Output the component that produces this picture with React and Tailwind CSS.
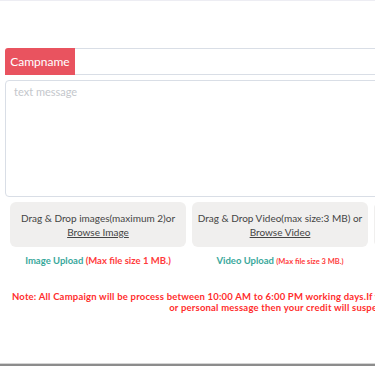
import React, { useState } from 'react';

const UploadBox = ({ line, link }) => (
  <div className="w-[176px] shrink-0 h-[45px] rounded-[6px] bg-[#f0efee] flex flex-col items-center justify-center whitespace-nowrap text-[10px] leading-[14px] text-[#444]">
    <span>{line}</span>
    <span className="underline">{link}</span>
  </div>
);

const App = () => {
  const [campname, setCampname] = useState('');
  const [message, setMessage] = useState('');

  return (
    <div className="w-[375px] h-[366px] overflow-hidden bg-white flex flex-col font-['Lato',sans-serif]">
      <div className="h-px bg-[#ededf3] shrink-0" />
      <div className="w-[560px] shrink-0 pt-[47px] px-[5px]">
        {/* campaign name */}
        <div className="flex h-[27px]">
          <div className="w-[70px] shrink-0 bg-[#e9535f] rounded-tl-[3px] text-white text-[12px] flex items-center justify-center">
            Campname
          </div>
          <input
            value={campname}
            onChange={(e) => setCampname(e.target.value)}
            className="flex-1 border-y border-[#d9dee6] outline-none px-2 text-[13px]"
          />
        </div>

        {/* message */}
        <textarea
          value={message}
          onChange={(e) => setMessage(e.target.value)}
          placeholder="text message"
          className="mt-[5px] block w-full h-[117px] border border-[#d9dee6] rounded-[4px] px-[8px] py-[3px] text-[11px] outline-none resize-none placeholder:text-[#c4c7cc]"
        />

        {/* uploads */}
        <div className="flex gap-[6px] pl-[5px] mt-[5px]">
          <div className="flex flex-col items-center">
            <UploadBox line="Drag & Drop images(maximum 2)or" link="Browse Image" />
            <p className="mt-[7px] whitespace-nowrap text-[9.5px] font-bold text-[#3aa89c]">
              Image Upload <span className="text-[#ff3b3b]">(Max file size 1 MB.)</span>
            </p>
          </div>
          <div className="flex flex-col items-center">
            <UploadBox line="Drag & Drop Video(max size:3 MB) or" link="Browse Video" />
            <p className="mt-[7px] whitespace-nowrap text-[9.5px] font-bold text-[#3aa89c]">
              Video Upload <span className="text-[7.5px] text-[#ff3b3b]">(Max file size 3 MB.)</span>
            </p>
          </div>
          <div className="flex flex-col items-center">
            <UploadBox line="Drag & Drop Audio(max size:2 MB) or" link="Browse Audio" />
          </div>
        </div>

        {/* note */}
        <p className="mt-[23px] text-center whitespace-nowrap text-[9.5px] leading-[11px] font-bold text-[#ff2d2d] tracking-[0.2px]">
          Note: All Campaign will be process between 10:00 AM to 6:00 PM working days.If you send any promotional, abusive, bad
          <br />
          or personal message then your credit will suspend.
        </p>
      </div>
      <div className="mt-auto h-[3px] shrink-0 bg-[#8c8c8c] border-t border-[#d4d4d4]" />
    </div>
  );
};

export default App;
